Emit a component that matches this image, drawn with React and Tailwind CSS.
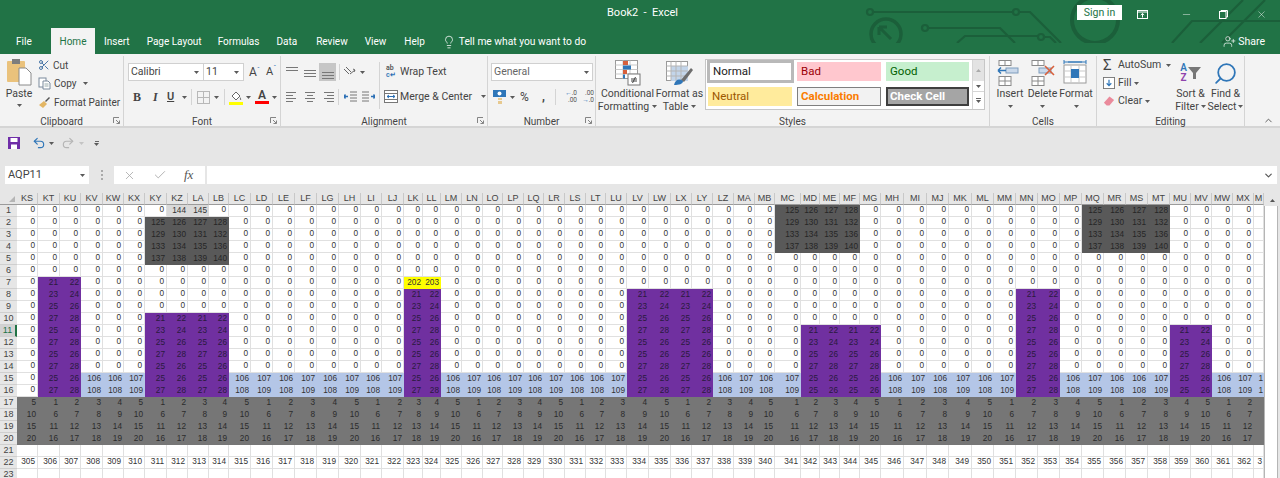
import React from 'react';
import { ChevronDown, ChevronUp, Undo2, Redo2, X, Check, Minus, Search, Lightbulb, UserPlus, Scissors } from 'lucide-react';

const COLS = [
  ['KS', 21], ['KT', 22], ['KU', 21], ['KV', 22], ['KW', 21], ['KX', 21], ['KY', 22], ['KZ', 21], ['LA', 21], ['LB', 20],
  ['LC', 22], ['LD', 22], ['LE', 22], ['LF', 22], ['LG', 22], ['LH', 22], ['LI', 21], ['LJ', 22], ['LK', 19], ['LL', 18],
  ['LM', 21], ['LN', 21], ['LO', 20], ['LP', 21], ['LQ', 20], ['LR', 21], ['LS', 21], ['LT', 20], ['LU', 21], ['LV', 22],
  ['LW', 22], ['LX', 21], ['LY', 21], ['LZ', 21], ['MA', 21], ['MB', 20], ['MC', 26], ['MD', 19], ['ME', 20], ['MF', 20],
  ['MG', 21], ['MH', 23], ['MI', 23], ['MJ', 22], ['MK', 23], ['ML', 22], ['MM', 22], ['MN', 22], ['MO', 22], ['MP', 22],
  ['MQ', 22], ['MR', 22], ['MS', 22], ['MT', 22], ['MU', 21], ['MV', 21], ['MW', 21], ['MX', 21], ['MY', 10],
];
const colIndex = {};
COLS.forEach(([name], i) => { colIndex[name] = i; });

// purple blocks: first column, column count, first row, left column values per row
const LONG = [21, 23, 25, 27, 25, 25, 27, 25, 27];
const PURPLE = [
  ['KT', 2, 7, [21, 23, 25, 27, 25, 27, 25, 27, 25, 27]],
  ['KY', 4, 10, [21, 23, 25, 27, 25, 25, 27]],
  ['LK', 2, 8, LONG],
  ['LV', 4, 8, LONG],
  ['MD', 4, 11, [21, 23, 25, 27, 25, 25]],
  ['MN', 2, 8, LONG],
  ['MU', 2, 11, [21, 23, 25, 27, 25, 25]],
];
const DARK = [['KY', 2], ['MC', 1], ['MQ', 1]];

// rows 15 and 16 of the blue stretches, left to right
const BLUE = {
  KV: [106, 106, 107], LC: [106, 107, 106, 107, 106, 107, 106, 107], LM: [106, 107, 106, 107, 106, 107, 106, 106, 107],
  LZ: [106, 107, 106, 107], MH: [106, 107, 106, 107, 106, 107], MP: [106, 107, 106, 106, 107], MW: [106, 107, 106],
};

const PLAIN = 'bg-white border-r border-b border-[#e0e0e0] text-[#333]';

const getCell = (c, r) => {
  const name = COLS[c][0];
  const cycle = ((c + 4) % 5) + 1;
  if (r === 21 || r === 23) return { v: '', cls: PLAIN };
  if (r === 22) return { v: 305 + c, cls: PLAIN };
  if (r >= 17) return { v: cycle + (r - 17) * 5, cls: 'bg-[#767676] text-[#2b2b2b]' };
  for (const [start, n, first, vals] of PURPLE) {
    const off = c - colIndex[start];
    if (off >= 0 && off < n && r >= first) {
      return { v: vals[r - first] + (off % 2), cls: 'bg-[#7030a0] text-[#2a1a3d]' };
    }
  }
  for (const [start, first] of DARK) {
    const off = c - colIndex[start];
    if (off >= 0 && off < 4 && r >= first && r < first + 4) {
      return { v: 125 + (r - first) * 4 + off, cls: 'bg-[#595959] text-[#262626]' };
    }
  }
  if (r === 7 && name === 'LK') return { v: 202, cls: 'bg-[#ffff00] text-[#333]' };
  if (r === 7 && name === 'LL') return { v: 203, cls: 'bg-[#ffff00] text-[#333]' };
  if (r === 1 && name === 'KZ') return { v: 144, cls: 'bg-[#d9d9d9] text-[#333]' };
  if (r === 1 && name === 'LA') return { v: 145, cls: 'bg-[#d9d9d9] text-[#333]' };
  if (r >= 15) {
    for (const start of Object.keys(BLUE)) {
      const off = c - colIndex[start];
      if (off >= 0 && off < BLUE[start].length) {
        return { v: BLUE[start][off] + (r === 16 ? 2 : 0), cls: 'bg-[#b4c6e7] text-[#333]' };
      }
    }
  }
  return { v: 0, cls: PLAIN };
};

const Caret = ({ className = '' }) => (
  <svg width="5" height="3" viewBox="0 0 5 3" className={`shrink-0 ${className}`}><path d="M0 0h5L2.5 3z" fill="#5a5a5a" /></svg>
);

const Launcher = () => (
  <svg width="7" height="7" viewBox="0 0 7 7" className="shrink-0">
    <path d="M.5 6V.5H6M3 3l3.2 3.2M6.5 3.5v3h-3" fill="none" stroke="#777" strokeWidth=".9" />
  </svg>
);

const Group = ({ label, width, launcher, children }) => (
  <div className={`${width} h-full flex flex-col border-r border-[#d4d4d4] shrink-0`}>
    <div className="flex-1 min-h-0 flex">{children}</div>
    <div className="h-[10px] flex items-center justify-center relative text-[10px] text-[#444]">
      {label}
      {launcher && <span className="absolute right-[3px] top-[1px] flex"><Launcher /></span>}
    </div>
  </div>
);

const Lines = ({ widths, x = 0, color = '#777' }) => (
  <svg width="16" height="13" viewBox="0 0 16 13" className="shrink-0">
    {widths.map((w, i) => {
      const start = x === 0 ? 2 : x === 1 ? 8 - w / 2 : 14 - w;
      return <rect key={i} x={start} y={1 + i * 3} width={w} height="1" fill={color} />;
    })}
  </svg>
);

const ClipboardIcon = () => (
  <svg width="26" height="28" viewBox="0 0 26 28">
    <rect x="1" y="3" width="18" height="21" rx="1" fill="#eac27c" />
    <rect x="6" y="1" width="8" height="5" fill="#7d7d7d" />
    <path d="M13 10h7l5 5v12H13z" fill="#fff" stroke="#8a8a8a" />
  </svg>
);

const CopyIcon = () => (
  <svg width="13" height="13" viewBox="0 0 13 13" fill="none" stroke="#7b8a9c">
    <rect x="1" y="1" width="7" height="9" fill="#fff" />
    <path d="M5 4h5l2 2v6H5z" fill="#fff" />
    <path d="M6.5 7h4M6.5 9h4" stroke="#9aa" />
  </svg>
);

const PainterIcon = () => (
  <svg width="13" height="13" viewBox="0 0 13 13">
    <path d="M1 9l5-4 3 3-4 4z" fill="#e3b664" />
    <path d="M7 5l4-4 1 1-4 4z" fill="#555" />
  </svg>
);

const BorderIcon = () => (
  <svg width="13" height="13" viewBox="0 0 13 13" fill="none" stroke="#b8b8b8">
    <rect x=".5" y=".5" width="12" height="12" />
    <path d="M6.5 0v13M0 6.5h13" />
  </svg>
);

const BucketIcon = () => (
  <svg width="14" height="15" viewBox="0 0 14 15">
    <path d="M3 6l4-4 4 4-4 4z" fill="#fff" stroke="#666" />
    <path d="M11 7c1 1.500 1.500 2.500 1 3s-1.500-1-1-3z" fill="#666" />
    <rect x="0" y="12" width="14" height="3" fill="#ffff00" />
  </svg>
);

const OrientIcon = () => (
  <svg width="14" height="13" viewBox="0 0 14 13" fill="none" stroke="#666">
    <path d="M1 3l5 5M3 1l5 5M7 8l5-4M10 3l2 1-1 2" />
  </svg>
);

const WrapIcon = () => (
  <div className="ml-[2px] w-[12px] text-[7px] leading-[7px] font-semibold text-[#555] shrink-0">
    ab<br /><span className="text-[#2b6fb5]">c↵</span>
  </div>
);

const MergeIcon = () => (
  <svg width="14" height="13" viewBox="0 0 14 13" fill="none" stroke="#777">
    <rect x=".5" y=".5" width="13" height="12" fill="#fff" />
    <path d="M0 3.500h14M0 9.500h14" />
    <path d="M3 6.500h8M3 6.500l2-1.500M3 6.500l2 1.500M11 6.500l-2-1.500M11 6.500l-2 1.500" stroke="#2b6fb5" />
  </svg>
);

const IndentIcon = ({ flip }) => (
  <svg width="13" height="12" viewBox="0 0 13 12" fill="none" className={flip ? '-scale-x-100' : ''}>
    <path d="M6 1h7M6 4h7M6 7h7M6 10h7" stroke="#777" />
    <path d="M0 5.500h4M1.500 3.500L0 5.500l1.500 2" stroke="#2b6fb5" strokeWidth="1.400" />
  </svg>
);

const MoneyIcon = () => (
  <svg width="14" height="14" viewBox="0 0 14 14" className="ml-[2px]">
    <rect x="0" y="0" width="13" height="7" fill="#2f76b8" />
    <circle cx="6.500" cy="3.500" r="2" fill="#fff" />
    <rect x="5" y="8" width="4" height="2" fill="#e7c98f" />
    <rect x="5" y="11" width="4" height="3" fill="#e7c98f" />
  </svg>
);

const DecimalIcon = ({ up }) => (
  <div className="w-[15px] text-[6.500px] leading-[7px] text-[#555] text-right shrink-0">
    {up ? <><span className="text-[#2b6fb5]">←</span>.0<br />.00</> : <>.00<br /><span className="text-[#2b6fb5]">→</span>.0</>}
  </div>
);

const CondIcon = () => (
  <svg width="26" height="26" viewBox="0 0 26 26">
    <rect x=".5" y=".5" width="22" height="18" fill="#fff" stroke="#9a9a9a" />
    <path d="M8 .5v18M15 .5v18M.5 5h22M.5 9.500h22M.5 14h22" stroke="#c9c9c9" />
    <rect x="8" y="1" width="5" height="4" fill="#d7603c" />
    <rect x="8" y="5.500" width="8" height="4" fill="#2f76b8" />
    <rect x="8" y="10" width="4" height="4" fill="#d7603c" />
    <rect x="8" y="14.500" width="2" height="4" fill="#2f76b8" />
    <rect x="13" y="14" width="12" height="11" fill="#fff" stroke="#777" />
    <path d="M16 19h6M16 21h6M20.500 17l-3 6" stroke="#444" fill="none" />
  </svg>
);

const TableIcon = () => (
  <svg width="28" height="25" viewBox="0 0 28 25">
    <rect x=".5" y=".5" width="21" height="19" fill="#fff" stroke="#9a9a9a" />
    <rect x="5" y="5" width="17" height="15" fill="#c3d5ea" />
    <path d="M5 .5v19M10 .5v19M15 .5v19M.5 5h21M.5 10h21M.5 15h21" stroke="#b5b5b5" />
    <path d="M15 19L25 7l2 2-9 12z" fill="#6d6d6d" />
    <path d="M8 24c1-5 5-7 9-4 0 3-4 4-9 4z" fill="#2f76b8" />
  </svg>
);

const CellsIcon = ({ kind }) => (
  <svg width="26" height="27" viewBox="0 0 26 27" fill="none">
    {kind === 'format' ? (
      <g>
        <path d="M1 2h22M1 0v4M23 0v4M5 2h14" stroke="#2f76b8" />
        <rect x="1" y="5" width="22" height="18" fill="#fff" stroke="#9a9a9a" />
        <path d="M8 5v18M16 5v18M1 11h22M1 17h22" stroke="#c9c9c9" />
        <rect x="8" y="9" width="8" height="9" fill="#2f76b8" />
      </g>
    ) : (
      <g stroke="#8a8a8a">
        <rect x="2" y=".5" width="12" height="5" fill="#fff" />
        <path d="M8 .5v5" />
        <rect x="2" y="16.500" width="12" height="9" fill="#fff" />
        <path d="M8 16.500v9M2 21h12" />
        <rect x="9" y="8" width="12" height="5" fill="#c9d8ea" stroke="#7f9dbd" />
        {kind === 'insert' ? (
          <path d="M1 10.500h8M1 10.500l3-3M1 10.500l3 3" stroke="#2f76b8" strokeWidth="1.500" />
        ) : (
          <path d="M15 6l9 9M24 6l-9 9" stroke="#d7603c" strokeWidth="1.600" />
        )}
      </g>
    )}
  </svg>
);

const RibbonButton = ({ icon, lines, caretInline, w }) => (
  <div className={`${w} flex flex-col items-center pt-[3px] text-[10.500px] leading-[13px] text-[#444]`}>
    <div className="h-[28px] flex items-center justify-center">{icon}</div>
    {lines.map((l, i) => (
      <div key={l} className="flex items-center gap-[3px]">
        {l}
        {caretInline && i === lines.length - 1 && <Caret />}
      </div>
    ))}
    {!caretInline && <div className="h-[13px] flex items-center"><Caret /></div>}
  </div>
);

const StyleGallery = () => (
  <div className="ml-[1px] mt-[3px] h-[51px] w-[280px] flex bg-white border border-[#c6c6c6]">
    <div className="flex-1 grid grid-cols-[90px_89px_83px] grid-rows-[24px_24px] gap-y-[1px] pl-[1px] text-[11.500px]">
      <div className="h-[23px] w-[87px] border-[3px] border-[#b9b9b9] flex items-center pl-[3px] text-[#222]">Normal</div>
      <div className="h-[19px] mt-[2px] w-[84px] bg-[#ffc7ce] text-[#9c0006] flex items-center pl-[4px]">Bad</div>
      <div className="h-[19px] mt-[2px] w-[83px] bg-[#c6efce] text-[#006100] flex items-center pl-[4px]">Good</div>
      <div className="h-[19px] mt-[2px] ml-[1px] w-[84px] bg-[#ffeb9c] text-[#9c5700] flex items-center pl-[4px]">Neutral</div>
      <div className="h-[19px] mt-[2px] w-[84px] bg-[#f2f2f2] border border-[#7f7f7f] text-[#fa7d00] font-bold flex items-center pl-[3px]">Calculation</div>
      <div className="h-[19px] mt-[2px] w-[83px] bg-[#a5a5a5] border-2 border-[#3f3f3f] text-white font-bold flex items-center pl-[2px]">Check Cell</div>
    </div>
    <div className="w-[12px] flex flex-col border-l border-[#d6d6d6] text-[#666]">
      <div className="h-[21px] bg-[#e3e3e3] flex items-center justify-center"><svg width="5" height="3" viewBox="0 0 5 3"><path d="M0 3h5L2.500 0z" fill="#aaa" /></svg></div>
      <div className="h-[11px] border-b border-[#d6d6d6] flex items-center justify-center"><Caret /></div>
      <div className="flex-1 flex flex-col items-center justify-center gap-[1px]"><div className="w-[5px] h-px bg-[#666]" /><Caret /></div>
    </div>
  </div>
);

const CircuitArt = () => (
  <svg className="absolute right-0 top-0 pointer-events-none" width="420" height="43" viewBox="860 0 420 43" fill="none" stroke="#1b5f3a" strokeWidth="2.200">
    <path d="M873 12h140M1019 12h11l31 31" />
    <circle cx="870" cy="12" r="3" />
    <circle cx="1016" cy="12" r="3" />
    <path d="M928 28h72l15 15M957 43l8-7h73M1044 37h6l6 6" />
    <circle cx="925" cy="28" r="3" />
    <circle cx="1041" cy="37" r="3" />
    <path d="M1172 43l20-22h88M1200 43l43-43M1222 43l43-43" />
    <circle cx="886" cy="34" r="15" strokeWidth="3.500" />
    <path d="M879 27l12 12M879 27v8M879 27h8" strokeWidth="3" />
    <circle cx="1095" cy="20" r="23" strokeWidth="4" />
  </svg>
);

const TitleBar = () => (
  <div className="relative h-[54px] bg-[#217346] shrink-0 text-white">
    <CircuitArt />
    <div className="relative h-[28px] flex items-center">
      <div className="absolute left-[607px] top-[5px] text-[11px] whitespace-pre">Book2  -  Excel</div>
      <div className="absolute left-[1077px] top-[5px] w-[45px] h-[15px] bg-white text-[#217346] text-[10.500px] flex items-center justify-center">Sign in</div>
      <div className="ml-auto flex items-center">
        <svg width="11" height="9" viewBox="0 0 11 9" fill="none" stroke="#fff" className="mr-[33px]"><rect x=".5" y=".5" width="10" height="8" /><path d="M0 2h11M5.500 7.500V3.500M3.800 5l1.700-1.500L7.200 5" /></svg>
        <Minus size={11} strokeWidth={1} className="mr-[27px]" />
        <svg width="9" height="9" viewBox="0 0 9 9" fill="none" stroke="#fff" className="mr-[28px]"><rect x=".5" y="1.500" width="6.500" height="7" /><path d="M2 1.500V.5h6.500v6.500H7" /></svg>
        <X size={11} strokeWidth={1} className="mr-[13px]" />
      </div>
    </div>
    <div className="relative h-[26px] flex items-end text-[10px]">
      <div className="w-[51px] h-[26px] pl-[16px] pt-[1px] flex items-center">File</div>
      <div className="w-[44px] h-[26px] pt-[1px] bg-[#f3f3f3] text-[#217346] flex items-center justify-center">Home</div>
      <div className="pl-[9px] pr-[17px] h-[26px] pt-[1px] flex items-center">Insert</div>
      <div className="pr-[16px] h-[26px] pt-[1px] flex items-center">Page Layout</div>
      <div className="pr-[17px] h-[26px] pt-[1px] flex items-center">Formulas</div>
      <div className="pr-[19px] h-[26px] pt-[1px] flex items-center">Data</div>
      <div className="pr-[17px] h-[26px] pt-[1px] flex items-center">Review</div>
      <div className="pr-[18px] h-[26px] pt-[1px] flex items-center">View</div>
      <div className="pr-[17px] h-[26px] pt-[1px] flex items-center">Help</div>
      <div className="h-[26px] pt-[1px] flex items-center gap-[3px] text-[10.250px]"><Lightbulb size={14} strokeWidth={1.300} />Tell me what you want to do</div>
      <div className="ml-auto mr-[15px] h-[26px] pt-[1px] flex items-center gap-[2px] text-[10.500px]"><UserPlus size={13} strokeWidth={1.300} />Share</div>
    </div>
  </div>
);

const Ribbon = () => (
  <div className="h-[74px] bg-[#f3f3f3] border-b-2 border-[#d5d5d5] shrink-0 flex pt-[2px] text-[#444] whitespace-nowrap">
    <Group label="Clipboard" width="w-[124px]" launcher>
      <div className="w-[38px] flex flex-col items-center pt-[2px] text-[10.500px] leading-[13px]">
        <ClipboardIcon />
        <span className="mt-[1px]">Paste</span>
        <Caret className="mt-[4px]" />
      </div>
      <div className="flex flex-col text-[10px]">
        <div className="h-[18px] flex items-center gap-[3px]"><Scissors size={12} color="#4a77a8" />Cut</div>
        <div className="h-[19px] flex items-center gap-[3px]"><CopyIcon />Copy<Caret className="ml-[3px]" /></div>
        <div className="h-[19px] flex items-center gap-[3px]"><PainterIcon />Format Painter</div>
      </div>
    </Group>
    <Group label="Font" width="w-[157px]" launcher>
      <div className="flex flex-col pl-[4px] pt-[7px]">
        <div className="flex items-center text-[10.500px]">
          <div className="w-[76px] h-[18px] bg-white border border-[#d0d0d0] flex items-center justify-between px-[2px]">Calibri<Caret className="mr-[2px]" /></div>
          <div className="w-[40px] h-[18px] bg-white border border-l-0 border-[#d0d0d0] flex items-center justify-between px-[2px]">11<Caret className="mr-[2px]" /></div>
          <span className="ml-[5px] w-[17px] text-[12px]">A<sup className="text-[#2b6fb5] text-[7px]">ˆ</sup></span>
          <span className="text-[11px]">A<sup className="text-[#2b6fb5] text-[7px]">ˇ</sup></span>
        </div>
        <div className="mt-[8px] flex items-center h-[16px] text-[11px]">
          <span className="w-[22px] pl-[5px] font-bold font-['Liberation_Serif',serif] text-[12px]">B</span>
          <span className="w-[17px] pl-[3px] italic font-['Liberation_Serif',serif] font-bold text-[12px]">I</span>
          <span className="w-[15px] underline font-semibold">U</span>
          <Caret className="mr-[4px]" />
          <div className="w-px h-[16px] bg-[#d4d4d4] mr-[5px]" />
          <BorderIcon />
          <Caret className="ml-[4px] mr-[5px]" />
          <div className="w-px h-[16px] bg-[#d4d4d4] mr-[4px]" />
          <BucketIcon />
          <Caret className="ml-[3px] mr-[4px]" />
          <div className="w-[14px] flex flex-col items-center leading-[11px] font-semibold text-[12px]">A<div className="w-[14px] h-[3px] bg-[#ff0000]" /></div>
          <Caret className="ml-[3px]" />
        </div>
      </div>
    </Group>
    <Group label="Alignment" width="w-[207px]" launcher>
      <div className="w-[98px] pl-[3px] pt-[7px] flex flex-col">
        <div className="flex items-center h-[18px]">
          <Lines widths={[12, 12]} x={1} />
          <div className="w-[2px]" />
          <Lines widths={[0, 12, 12, 12]} x={1} />
          <div className="ml-[1px] w-[17px] h-[18px] bg-[#c6c6c6] flex items-end justify-center"><Lines widths={[0, 12, 12, 12]} x={1} /></div>
          <div className="w-px h-[16px] bg-[#d4d4d4] mx-[3px]" />
          <OrientIcon />
          <Caret className="ml-[3px]" />
        </div>
        <div className="mt-[8px] flex items-center h-[16px]">
          <Lines widths={[10, 7, 10, 7]} x={0} />
          <div className="w-[2px]" />
          <Lines widths={[10, 6, 10, 6]} x={1} />
          <div className="w-[2px]" />
          <Lines widths={[10, 7, 10, 7]} x={2} />
          <div className="w-px h-[16px] bg-[#d4d4d4] ml-[2px] mr-[5px]" />
          <IndentIcon />
          <div className="w-[5px]" />
          <IndentIcon flip />
        </div>
      </div>
      <div className="border-l border-[#d4d4d4] h-[47px] mt-[6px]" />
      <div className="flex flex-col pl-[4px] pt-[4px] text-[10.500px]">
        <div className="h-[24px] flex items-center gap-[2px]"><WrapIcon />Wrap Text</div>
        <div className="h-[25px] flex items-center gap-[2px]"><MergeIcon />Merge &amp; Center<Caret className="ml-[7px]" /></div>
      </div>
    </Group>
    <Group label="Number" width="w-[108px]" launcher>
      <div className="flex flex-col pl-[3px] pt-[7px]">
        <div className="w-[102px] h-[18px] bg-white border border-[#d0d0d0] flex items-center justify-between pl-[2px] pr-[3px] text-[10.500px] text-[#666]">General<Caret /></div>
        <div className="mt-[8px] h-[16px] flex items-center text-[12px]">
          <MoneyIcon />
          <Caret className="ml-[3px] mr-[5px]" />
          <span className="w-[16px]">%</span>
          <span className="w-[16px] pl-[6px] font-bold leading-none">,</span>
          <div className="w-px h-[16px] bg-[#d4d4d4] ml-[3px] mr-[6px]" />
          <DecimalIcon up />
          <div className="w-[2px]" />
          <DecimalIcon />
        </div>
      </div>
    </Group>
    <Group label="Styles" width="w-[394px]">
      <RibbonButton w="w-[55px] ml-[4px]" icon={<CondIcon />} lines={['Conditional', 'Formatting']} caretInline />
      <RibbonButton w="w-[49px]" icon={<TableIcon />} lines={['Format as', 'Table']} caretInline />
      <StyleGallery />
    </Group>
    <Group label="Cells" width="w-[107px]">
      <div className="flex pl-[4px]">
        <RibbonButton w="w-[32px]" icon={<CellsIcon kind="insert" />} lines={['Insert']} />
        <RibbonButton w="w-[33px]" icon={<CellsIcon kind="delete" />} lines={['Delete']} />
        <RibbonButton w="w-[34px]" icon={<CellsIcon kind="format" />} lines={['Format']} />
      </div>
    </Group>
    <Group label="Editing" width="w-[148px]">
      <div className="w-[77px] flex flex-col pl-[6px] text-[10.500px]">
        <div className="h-[18px] flex items-center gap-[3px]"><span className="w-[12px] text-[15px] leading-none text-[#444]">Σ</span>AutoSum<Caret className="ml-[2px]" /></div>
        <div className="h-[18px] flex items-center gap-[3px]"><svg width="12" height="12" viewBox="0 0 13 13" fill="none"><rect x=".5" y=".5" width="12" height="12" fill="#fff" stroke="#777" /><path d="M6.500 3v6M4 6.800l2.500 2.500L9 6.800" stroke="#2f76b8" strokeWidth="1.300" /></svg>Fill<Caret /></div>
        <div className="h-[18px] flex items-center gap-[3px]"><svg width="12" height="12" viewBox="0 0 13 12"><path d="M1 8l6-7 5 4-5 6H4z" fill="#ea8a9b" /></svg>Clear<Caret /></div>
      </div>
      <div className="w-[33px] flex flex-col items-center pt-[3px] text-[10.500px] leading-[13px]">
        <div className="h-[28px] flex items-center gap-[1px]">
          <div className="flex flex-col items-center text-[10px] leading-[10px] font-semibold"><span className="text-[#2f76b8]">A</span><span className="text-[#8e44ad]">Z</span></div>
          <svg width="13" height="12" viewBox="0 0 13 12"><path d="M0 0h13L8 6v6H5V6z" fill="#777" /></svg>
        </div>
        <div>Sort &amp;</div>
        <div className="flex items-center gap-[2px]">Filter<Caret /></div>
      </div>
      <div className="flex-1 flex flex-col items-center pt-[3px] text-[10.500px] leading-[13px]">
        <div className="h-[28px] flex items-center"><Search size={25} color="#2f76b8" strokeWidth={1.700} className="-scale-x-100" /></div>
        <div>Find &amp;</div>
        <div className="flex items-center gap-[2px]">Select<Caret /></div>
      </div>
    </Group>
    <div className="flex-1 flex items-end justify-end pr-[6px]"><ChevronUp size={11} color="#555" /></div>
  </div>
);

const QuickAccess = () => (
  <div className="h-[28px] pt-[2px] shrink-0 flex items-center pl-[8px]">
    <svg width="12" height="12" viewBox="0 0 12 12"><rect width="12" height="12" fill="#6f2da8" /><rect x="2.500" y="1" width="7" height="4" fill="#fff" /><rect x="3" y="7.500" width="6" height="4.500" fill="#fff" /></svg>
    <Undo2 size={14} color="#2f76b8" strokeWidth={2} className="ml-[12px]" />
    <Caret className="ml-[3px]" />
    <Redo2 size={14} color="#b5b5b5" strokeWidth={2} className="ml-[7px]" />
    <svg width="5" height="3" viewBox="0 0 5 3" className="ml-[4px]"><path d="M0 0h5L2.500 3z" fill="#c4c4c4" /></svg>
    <div className="ml-[10px] flex flex-col items-center gap-[1px]"><div className="w-[4px] h-px bg-[#666]" /><Caret /></div>
  </div>
);

const FormulaBar = () => (
  <div className="h-[18px] mt-[10px] shrink-0 flex text-[11px]">
    <div className="ml-[5px] w-[84px] bg-white flex items-center justify-between px-[3px] text-[#444]">AQP11<Caret className="mr-[1px]" /></div>
    <div className="w-[25px] flex flex-col items-center justify-center gap-[2px]"><i className="w-[2px] h-[2px] bg-[#aaa]" /><i className="w-[2px] h-[2px] bg-[#aaa]" /><i className="w-[2px] h-[2px] bg-[#aaa]" /></div>
    <div className="w-[91px] bg-white flex items-center pl-[9px]">
      <X size={13} color="#a8a8a8" strokeWidth={1.500} />
      <Check size={14} color="#a8a8a8" strokeWidth={1.500} className="ml-[17px]" />
      <span className="ml-[17px] font-['Liberation_Serif',serif] italic text-[13px] text-[#555]">fx</span>
    </div>
    <div className="ml-[2px] mr-[3px] flex-1 bg-white flex items-center justify-end pr-[3px]"><ChevronDown size={11} color="#555" strokeWidth={2.500} /></div>
  </div>
);

const Sheet = () => {
  const rows = Array.from({ length: 23 }, (_, i) => i + 1);
  return (
    <div className="mt-[9px] flex flex-1 min-h-0 overflow-hidden">
      <div className="w-[1264px] grid auto-rows-[12px] grid-cols-[17px_21px_22px_21px_22px_21px_21px_22px_21px_21px_20px_22px_22px_22px_22px_22px_22px_21px_22px_19px_18px_21px_21px_20px_21px_20px_21px_21px_20px_21px_22px_22px_21px_21px_21px_21px_20px_26px_19px_20px_20px_21px_23px_23px_22px_23px_22px_22px_22px_22px_22px_22px_22px_22px_22px_21px_21px_21px_21px_10px] font-['Liberation_Sans',sans-serif] text-[8.250px]">
        <div className="border-b border-[#9b9b9b] flex items-end justify-end p-[2px]"><svg width="6" height="6" viewBox="0 0 6 6"><path d="M6 0v6H0z" fill="#b5b5b5" /></svg></div>
        {COLS.map(([name]) => (
          <div key={name} className="border-r border-b border-r-[#c8c8c8] border-b-[#9b9b9b] flex items-center justify-center overflow-hidden text-[9px] text-[#444]">{name === 'MY' ? 'M' : name}</div>
        ))}
        {rows.map((r) => (
          <React.Fragment key={r}>
            <div className={`flex items-center justify-center border-b border-[#cfcfcf] text-[9px] ${r === 11 ? 'border-r-2 border-r-[#217346] bg-[#d2d2d2] text-[#217346]' : 'text-[#444]'}`}>{r}</div>
            {COLS.map(([name], c) => {
              const cell = getCell(c, r);
              // the last column is cut by the scrollbar: only its first digit shows, and only on the wider values
              const last = name === 'MY';
              const text = !last ? cell.v : r === 15 || r === 16 ? '1' : r === 22 ? '3' : '';
              return (
                <div key={name} className={`flex items-center overflow-hidden justify-end ${last ? 'pr-[1px]' : 'pr-[2px]'} ${cell.cls}`}>
                  {text}
                </div>
              );
            })}
          </React.Fragment>
        ))}
      </div>
      <div className="w-[16px] pt-[2px] flex flex-col">
        <div className="h-[11px] flex items-center justify-center"><svg width="5" height="3" viewBox="0 0 5 3"><path d="M0 3h5L2.500 0z" fill="#555" /></svg></div>
        <div className="flex-1 bg-white border-x border-[#b5b5b5] mr-[2px]" />
      </div>
    </div>
  );
};

const App = () => {
  return (
    <div className="w-[1280px] h-[478px] overflow-hidden flex flex-col bg-[#e6e6e6] font-['Roboto',sans-serif]">
      <TitleBar />
      <Ribbon />
      <QuickAccess />
      <FormulaBar />
      <Sheet />
    </div>
  );
};

export default App;
